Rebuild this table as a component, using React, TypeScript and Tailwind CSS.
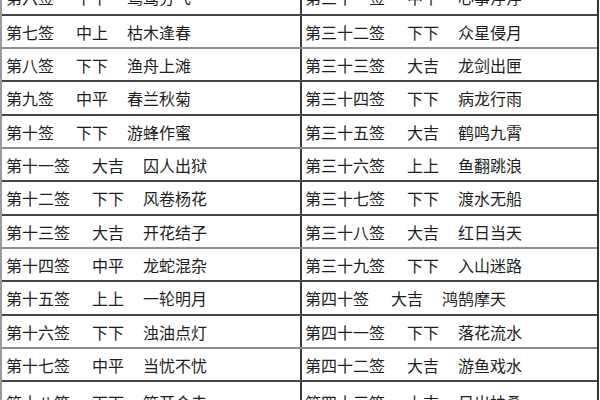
import React from "react";

type Row = { l: [string, string, string]; r: [string, string, string]; h: string; dark: boolean };

const rows: Row[] = [
  { l: ["第六签", "下下", "鸳鸯分飞"], r: ["第三十一签", "中平", "心事浮浮"], h: "h-[36px]", dark: true },
  { l: ["第七签", "中上", "枯木逢春"], r: ["第三十二签", "下下", "众星侵月"], h: "h-[33px]", dark: false },
  { l: ["第八签", "下下", "渔舟上滩"], r: ["第三十三签", "大吉", "龙剑出匣"], h: "h-[33px]", dark: true },
  { l: ["第九签", "中平", "春兰秋菊"], r: ["第三十四签", "下下", "病龙行雨"], h: "h-[34px]", dark: true },
  { l: ["第十签", "下下", "游蜂作蜜"], r: ["第三十五签", "大吉", "鹤鸣九霄"], h: "h-[33px]", dark: false },
  { l: ["第十一签", "大吉", "囚人出狱"], r: ["第三十六签", "上上", "鱼翻跳浪"], h: "h-[33px]", dark: true },
  { l: ["第十二签", "下下", "风卷杨花"], r: ["第三十七签", "下下", "渡水无船"], h: "h-[34px]", dark: true },
  { l: ["第十三签", "大吉", "开花结子"], r: ["第三十八签", "大吉", "红日当天"], h: "h-[33px]", dark: false },
  { l: ["第十四签", "中平", "龙蛇混杂"], r: ["第三十九签", "下下", "入山迷路"], h: "h-[33px]", dark: true },
  { l: ["第十五签", "上上", "一轮明月"], r: ["第四十签", "大吉", "鸿鹄摩天"], h: "h-[34px]", dark: true },
  { l: ["第十六签", "下下", "浊油点灯"], r: ["第四十一签", "下下", "落花流水"], h: "h-[33px]", dark: false },
  { l: ["第十七签", "中平", "当忧不忧"], r: ["第四十二签", "大吉", "游鱼戏水"], h: "h-[33px]", dark: true },
  { l: ["第十八签", "下下", "笋开合去"], r: ["第四十三签", "上吉", "日出扶桑"], h: "h-[40px]", dark: false },
];

function Cell({ t, right }: { t: [string, string, string]; right?: boolean }) {
  return (
    <div
      className={
        right
          ? "flex items-center pl-[3px] border-l-2 border-[#3a3a3a]"
          : "flex items-center pl-[4px]"
      }
    >
      <span>{t[0]}</span>
      <span className="ml-[22px]">{t[1]}</span>
      <span className="ml-[19px]">{t[2]}</span>
    </div>
  );
}

export default function App() {
  return (
    <div
      className="w-[600px] h-[400px] overflow-hidden bg-white text-[16px] leading-none text-[#1e1e1e]"
      style={{ fontFamily: '"Noto Sans CJK SC", "Noto Sans", sans-serif' }}
    >
      <div className="-mt-[20px] w-[599px] flex flex-col border-l-2 border-r-2 border-l-[#9a9a9a] border-r-[#333]">
        {rows.map((row, i) => (
          <div
            key={i}
            className={
              row.h +
              " grid grid-cols-[298px_1fr] " +
              (i === rows.length - 1
                ? ""
                : row.dark
                ? "border-b-2 border-[#454545]"
                : "border-b-2 border-[#8c8c8c]")
            }
          >
            <Cell t={row.l} />
            <Cell t={row.r} right />
          </div>
        ))}
      </div>
    </div>
  );
}
